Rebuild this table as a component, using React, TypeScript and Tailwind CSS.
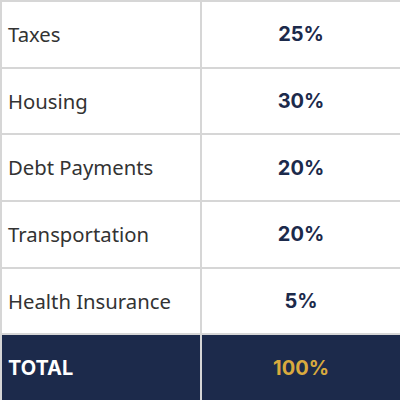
import React from "react";

const rows = [
  ["Taxes", "25%"],
  ["Housing", "30%"],
  ["Debt Payments", "20%"],
  ["Transportation", "20%"],
  ["Health Insurance", "5%"],
];

export default function App() {
  return (
    <div className="w-[400px] h-[400px] grid grid-cols-[198px_198px] grid-rows-6 gap-[2px] bg-[#d6d6d6] px-[2px] pt-[2px] overflow-hidden">
      {rows.map(([label, value]) => (
        <React.Fragment key={label}>
          <div className="bg-white flex items-center pl-[6px] text-[20.3px] text-[#333333] font-['Noto_Sans',sans-serif]">
            {label}
          </div>
          <div className="bg-white flex items-center justify-center text-[20px] font-bold text-[#1c2a4b] font-['Inter',sans-serif]">
            {value}
          </div>
        </React.Fragment>
      ))}
      <div className="bg-[#1c2a4b] flex items-center pl-[6px] text-[20px] font-bold text-white font-['Inter',sans-serif]">
        TOTAL
      </div>
      <div className="bg-[#1c2a4b] flex items-center justify-center text-[20px] font-bold text-[#d9aa3e] font-['Inter',sans-serif]">
        100%
      </div>
    </div>
  );
}
